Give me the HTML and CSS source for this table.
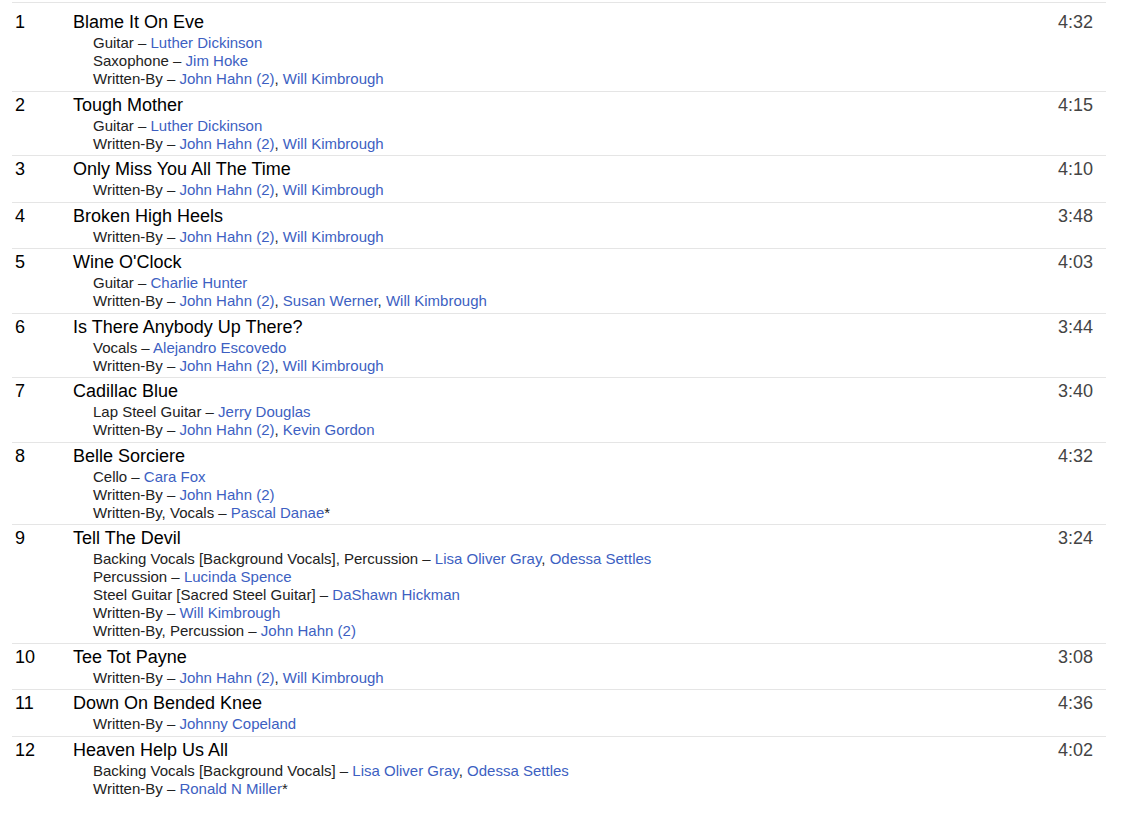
FILE: index.html
```html
<!DOCTYPE html>
<html>
<head>
<meta charset="utf-8">
<link rel="stylesheet" href="styles.css">
</head>
<body>
<table class="tracklist">
<tbody>
<tr class="track first"><td class="pos">1</td><td class="info"><div class="title">Blame It On Eve</div>
<div class="credits">
<div class="credit">Guitar – <a href="#">Luther Dickinson</a></div>
<div class="credit">Saxophone – <a href="#">Jim Hoke</a></div>
<div class="credit">Written-By – <a href="#">John Hahn (2)</a>, <a href="#">Will Kimbrough</a></div>
</div></td><td class="dur">4:32</td></tr>

<tr class="track"><td class="pos">2</td><td class="info"><div class="title">Tough Mother</div>
<div class="credits">
<div class="credit">Guitar – <a href="#">Luther Dickinson</a></div>
<div class="credit">Written-By – <a href="#">John Hahn (2)</a>, <a href="#">Will Kimbrough</a></div>
</div></td><td class="dur">4:15</td></tr>

<tr class="track"><td class="pos">3</td><td class="info"><div class="title">Only Miss You All The Time</div>
<div class="credits">
<div class="credit">Written-By – <a href="#">John Hahn (2)</a>, <a href="#">Will Kimbrough</a></div>
</div></td><td class="dur">4:10</td></tr>

<tr class="track"><td class="pos">4</td><td class="info"><div class="title">Broken High Heels</div>
<div class="credits">
<div class="credit">Written-By – <a href="#">John Hahn (2)</a>, <a href="#">Will Kimbrough</a></div>
</div></td><td class="dur">3:48</td></tr>

<tr class="track"><td class="pos">5</td><td class="info"><div class="title">Wine O'Clock</div>
<div class="credits">
<div class="credit">Guitar – <a href="#">Charlie Hunter</a></div>
<div class="credit">Written-By – <a href="#">John Hahn (2)</a>, <a href="#">Susan Werner</a>, <a href="#">Will Kimbrough</a></div>
</div></td><td class="dur">4:03</td></tr>

<tr class="track"><td class="pos">6</td><td class="info"><div class="title">Is There Anybody Up There?</div>
<div class="credits">
<div class="credit">Vocals – <a href="#">Alejandro Escovedo</a></div>
<div class="credit">Written-By – <a href="#">John Hahn (2)</a>, <a href="#">Will Kimbrough</a></div>
</div></td><td class="dur">3:44</td></tr>

<tr class="track"><td class="pos">7</td><td class="info"><div class="title">Cadillac Blue</div>
<div class="credits">
<div class="credit">Lap Steel Guitar – <a href="#">Jerry Douglas</a></div>
<div class="credit">Written-By – <a href="#">John Hahn (2)</a>, <a href="#">Kevin Gordon</a></div>
</div></td><td class="dur">3:40</td></tr>

<tr class="track"><td class="pos">8</td><td class="info"><div class="title">Belle Sorciere</div>
<div class="credits">
<div class="credit">Cello – <a href="#">Cara Fox</a></div>
<div class="credit">Written-By – <a href="#">John Hahn (2)</a></div>
<div class="credit">Written-By, Vocals – <a href="#">Pascal Danae</a>*</div>
</div></td><td class="dur">4:32</td></tr>

<tr class="track"><td class="pos">9</td><td class="info"><div class="title">Tell The Devil</div>
<div class="credits">
<div class="credit">Backing Vocals [Background Vocals], Percussion – <a href="#">Lisa Oliver Gray</a>, <a href="#">Odessa Settles</a></div>
<div class="credit">Percussion – <a href="#">Lucinda Spence</a></div>
<div class="credit">Steel Guitar [Sacred Steel Guitar] – <a href="#">DaShawn Hickman</a></div>
<div class="credit">Written-By – <a href="#">Will Kimbrough</a></div>
<div class="credit">Written-By, Percussion – <a href="#">John Hahn (2)</a></div>
</div></td><td class="dur">3:24</td></tr>

<tr class="track"><td class="pos">10</td><td class="info"><div class="title">Tee Tot Payne</div>
<div class="credits">
<div class="credit">Written-By – <a href="#">John Hahn (2)</a>, <a href="#">Will Kimbrough</a></div>
</div></td><td class="dur">3:08</td></tr>

<tr class="track"><td class="pos">11</td><td class="info"><div class="title">Down On Bended Knee</div>
<div class="credits">
<div class="credit">Written-By – <a href="#">Johnny Copeland</a></div>
</div></td><td class="dur">4:36</td></tr>

<tr class="track last"><td class="pos">12</td><td class="info"><div class="title">Heaven Help Us All</div>
<div class="credits">
<div class="credit">Backing Vocals [Background Vocals] – <a href="#">Lisa Oliver Gray</a>, <a href="#">Odessa Settles</a></div>
<div class="credit">Written-By – <a href="#">Ronald N Miller</a>*</div>
</div></td><td class="dur">4:02</td></tr>
</tbody>
</table>
</body>
</html>
```

FILE: styles.css
```css
html, body {
  margin: 0;
  padding: 0;
  background: #ffffff;
}
body {
  padding: 2px 17px 0 12px;
  font-family: "Liberation Sans", Arial, sans-serif;
  color: #000;
}
.tracklist {
  width: 1094px;
  border-collapse: collapse;
}
.track td {
  border-top: 1px solid #e5e5e5;
  vertical-align: top;
  padding: 2px 0 2.5px 0;
}
.track.first td {
  padding-top: 8px;
}
.pos {
  width: 55px;
  padding-left: 3px !important;
  font-size: 18px;
  line-height: 23px;
}
.info {
  padding-left: 3px !important;
}
.title {
  font-size: 18px;
  line-height: 23px;
}
.credits {
  padding-left: 20px;
  font-size: 15px;
  line-height: 18px;
  color: #222;
}
.credit a {
  color: #3d5fc2;
  text-decoration: none;
}
.dur {
  width: 80px;
  text-align: right;
  padding-right: 13px !important;
  font-size: 18px;
  line-height: 23px;
  color: #444;
}
```
